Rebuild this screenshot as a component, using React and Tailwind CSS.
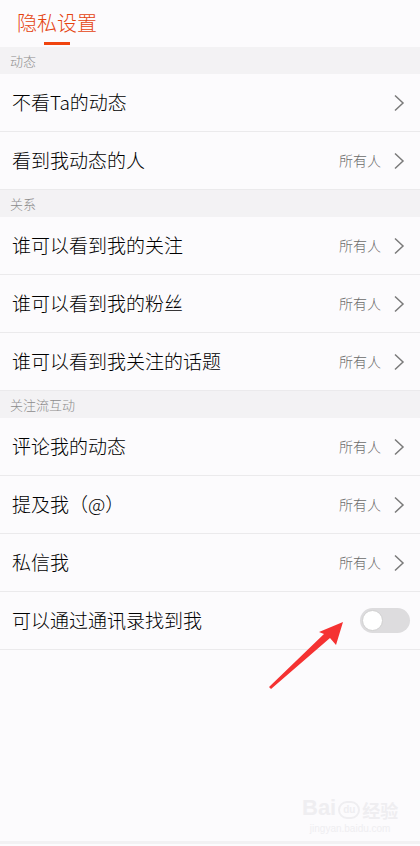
import React from "react";

const font = { fontFamily: '"Noto Sans CJK SC", "Noto Sans", sans-serif' };

const Chevron = () => (
    <svg width="12" height="18" viewBox="0 0 12 18" className="ml-3">
        <path d="M2 1.5 L10 9 L2 16.5" fill="none" stroke="#7a7a7a" strokeWidth="1.5" />
    </svg>
);

const Section = ({ title }) => (
    <div className="h-[27px] bg-[#f3f2f4] flex items-center px-[10px] text-[13px] font-light text-[#8c8c8c]">{title}</div>
);

const Row = ({ label, value }) => (
    <div className="h-[58px] flex items-center justify-between pl-[12px] pr-[15px] border-b border-[#ebeaec]">
        <span className="text-[19px] font-light text-black">{label}</span>
        <div className="flex items-center">
            {value && <span className="text-[14px] font-light text-[#6a6a6a]">{value}</span>}
            <Chevron />
        </div>
    </div>
);

const App = () => {
    return (
        <div style={font} className="relative w-[420px] h-[846px] bg-[#fcfbfd] overflow-hidden">
            <div className="h-[47px] relative">
                <span className="absolute left-[17px] top-[8px] text-[20px] font-light text-[#e5430f]">隐私设置</span>
                <div className="absolute left-[44px] top-[42px] w-[26px] h-[3px] bg-[#f0440f]"></div>
            </div>
            <Section title="动态" />
            <Row label="不看Ta的动态" />
            <Row label="看到我动态的人" value="所有人" />
            <Section title="关系" />
            <Row label="谁可以看到我的关注" value="所有人" />
            <Row label="谁可以看到我的粉丝" value="所有人" />
            <Row label="谁可以看到我关注的话题" value="所有人" />
            <Section title="关注流互动" />
            <Row label="评论我的动态" value="所有人" />
            <Row label="提及我（@）" value="所有人" />
            <Row label="私信我" value="所有人" />
            <div className="h-[58px] flex items-center justify-between pl-[12px] pr-[10px] border-b border-[#ebeaec]">
                <span className="text-[19px] font-light text-black">可以通过通讯录找到我</span>
                <div className="w-[50px] h-[25px] rounded-full bg-[#dddcde] flex items-center px-[2px]">
                    <div className="w-[21px] h-[21px] rounded-full bg-white border border-[#d0d0d0]"></div>
                </div>
            </div>

            {/* red annotation arrow */}
            <svg className="absolute left-0 top-0" width="420" height="846">
                <polygon points="343,622 336,645 330,638 271,689 269,687 324,634 319,632" fill="#f53232" />
            </svg>

            {/* watermark */}
            <div className="absolute left-[302px] top-[797px] flex flex-col items-center text-[#efeef1] select-none">
                <div className="flex items-end text-[22px] font-bold leading-none" style={{ fontFamily: '"Liberation Sans", sans-serif' }}>
                    <span>Bai</span>
                    <span className="mx-[2px] w-[22px] h-[18px] rounded-full border-2 border-[#efeef1] text-[10px] flex items-center justify-center">du</span>
                    <span className="text-[18px]" style={font}>经验</span>
                </div>
                <span className="text-[10px] mt-[2px]" style={{ fontFamily: '"Liberation Sans", sans-serif' }}>jingyan.baidu.com</span>
            </div>
            <div className="absolute left-0 bottom-[2px] w-full h-[3px] bg-[#f2f1f3]"></div>
        </div>
    );
};

export default App;
